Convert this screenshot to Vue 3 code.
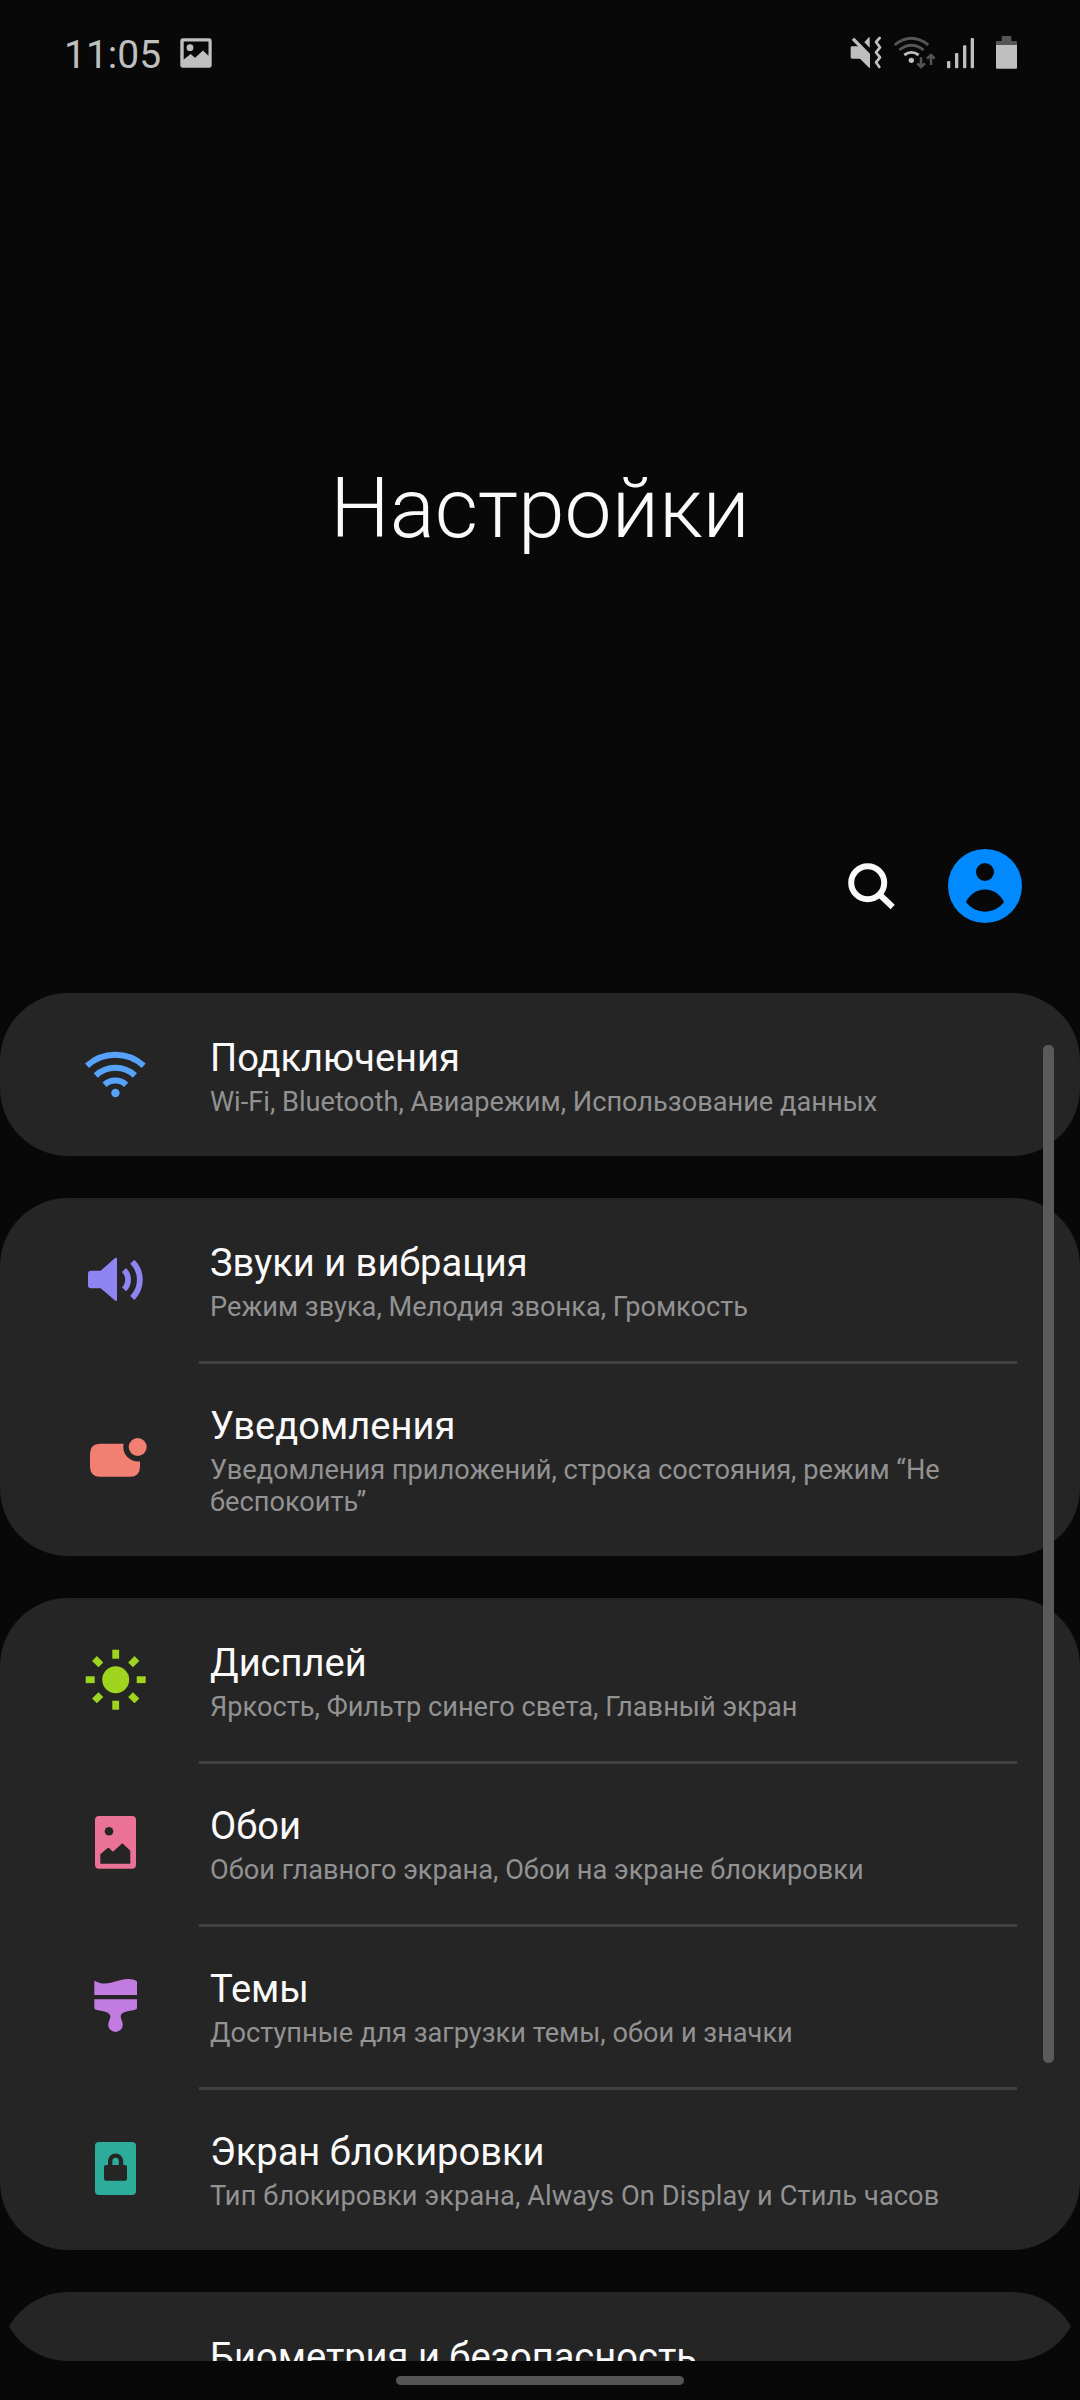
<script setup>
const groups = [
  [
    { icon: 'wifi', title: 'Подключения', sub: 'Wi-Fi, Bluetooth, Авиарежим, Использование данных' },
  ],
  [
    { icon: 'sound', title: 'Звуки и вибрация', sub: 'Режим звука, Мелодия звонка, Громкость' },
    { icon: 'notice', title: 'Уведомления', sub: 'Уведомления приложений, строка состояния, режим “Не беспокоить”' },
  ],
  [
    { icon: 'display', title: 'Дисплей', sub: 'Яркость, Фильтр синего света, Главный экран' },
    { icon: 'wallpaper', title: 'Обои', sub: 'Обои главного экрана, Обои на экране блокировки' },
    { icon: 'themes', title: 'Темы', sub: 'Доступные для загрузки темы, обои и значки' },
    { icon: 'lock', title: 'Экран блокировки', sub: 'Тип блокировки экрана, Always On Display и Стиль часов' },
  ],
]
const rays = [0, 45, 90, 135, 180, 225, 270, 315]
</script>

<template>
  <div class="screen">
    <header class="status">
      <span class="clock">11:05</span>
      <svg class="photo" width="32" height="31" viewBox="0 0 32 31">
        <path fill="#bfbfbf" fill-rule="evenodd" d="M3 .3H29Q31.700 .3 31.700 3V27Q31.700 29.800 29 29.800H3Q.3 29.800 .3 27V3Q.3 .3 3 .3ZM3.700 3.500V21.500L10.700 16L15 19.700L23 12.500L28.500 17.700V3.500Z" />
        <circle cx="10" cy="9.700" r="3.400" fill="#bfbfbf" />
      </svg>
      <div class="indicators">
        <svg width="32" height="35" viewBox="60 45 96 105" fill="#bfbfbf">
          <path d="M65 59L73 53L120 101V143H117L90 116H66Q62 116 62 112V83Q62 79 66 79H84Z" />
          <path d="M119 51V83L103 67L115 53Z" />
          <path d="M149 54L138 66L150 82L138 97L150 112L138 127L148 141" fill="none" stroke="#bfbfbf" stroke-width="8" stroke-linejoin="round" stroke-linecap="round" />
        </svg>
        <svg class="i-wifi" width="44" height="35" viewBox="189 45 132 105" fill="none" stroke-width="8.500">
          <path d="M194 75Q244 35 295 75" stroke="#555" />
          <path d="M208 90Q244 61 281 90" stroke="#555" />
          <path d="M223 105Q244 89 266 105" stroke="#bfbfbf" />
          <circle cx="244" cy="121" r="8" fill="#bfbfbf" />
          <path d="M273 112V139M262 130L273 141L285 130M303 135V108M291 116L303 105L314 116" stroke="#555" stroke-width="7.500" />
        </svg>
        <svg class="i-signal" width="29" height="35" viewBox="348 45 87 105" fill="#bfbfbf">
          <rect x="351" y="123" width="10" height="22" rx="3" />
          <rect x="375" y="99" width="10" height="46" rx="3" />
          <rect x="399" y="76" width="10" height="69" rx="3" />
          <rect x="422" y="54" width="10" height="91" rx="3" />
        </svg>
        <svg class="i-battery" width="23" height="35" viewBox="495 45 69 105">
          <path d="M518 48H541Q544 48 544 51V63H558Q561 63 561 66V76H498V66Q498 63 501 63H515V51Q515 48 518 48Z" fill="#555" />
          <path d="M498 75H561V143Q561 146 558 146H501Q498 146 498 143Z" fill="#bfbfbf" />
        </svg>
      </div>
    </header>

    <h1 class="heading">Настройки</h1>

    <div class="actions">
      <svg width="54" height="54" viewBox="0 0 54 54" fill="none" stroke="#fafafa" stroke-width="6">
        <circle cx="23.700" cy="23.700" r="16.500" />
        <path d="M35.500 35.500L48.700 48" />
      </svg>
      <svg class="avatar" width="74" height="74" viewBox="0 0 74 74">
        <circle cx="37" cy="37" r="37" fill="#018aff" />
        <circle cx="37" cy="23" r="9" fill="#080808" />
        <path d="M18 53.300A20.500 20.500 0 0 1 56 53.300A24 24 0 0 1 18 53.300Z" fill="#080808" />
      </svg>
    </div>

    <main class="list">
      <section v-for="(group, g) in groups" :key="g" class="card">
        <article v-for="item in group" :key="item.icon" class="row" :class="item.icon">
          <svg class="icon" width="73" height="73" viewBox="0 0 73 73">
            <g v-if="item.icon === 'wifi'" fill="none" stroke="#57a3fb" stroke-width="6">
              <path d="M8 27.700A42 42 0 0 1 64.700 27.700" />
              <path d="M16.800 37.500A28.500 28.500 0 0 1 55.900 37.500" />
              <path d="M25.500 46.700A16 16 0 0 1 47.200 46.700" />
              <circle cx="36.400" cy="55" r="4.200" fill="#57a3fb" stroke="none" />
            </g>
            <g v-else-if="item.icon === 'sound'" fill="#8f85f2">
              <path d="M12 27.700H21.700L36 15Q38 14 38 16V56.500Q38 59 36 57.500L21.700 45.300H12Q9 45.300 9 42.300V30.700Q9 27.700 12 27.700Z" />
              <path d="M45 27A13.500 13.500 0 0 1 45 46.300M53.300 18.700A25.600 25.600 0 0 1 53.300 55" fill="none" stroke="#8f85f2" stroke-width="5.800" />
            </g>
            <g v-else-if="item.icon === 'notice'" fill="#f28072">
              <path d="M21 21.700H44.600A14.500 14.500 0 0 0 61 39.300V44.700Q61 54.700 51 54.700H21Q11 54.700 11 44.700V31.700Q11 21.700 21 21.700Z" />
              <circle cx="58.700" cy="25" r="9" />
            </g>
            <g v-else-if="item.icon === 'display'" fill="#9fd51f">
              <circle cx="36.700" cy="36.700" r="13.500" />
              <rect v-for="r in rays" :key="r" x="33.300" y="6.700" width="6.800" height="9" :transform="`rotate(${r} 36.7 36.7)`" />
            </g>
            <g v-else-if="item.icon === 'wallpaper'">
              <rect x="16" y="10" width="41" height="52.800" rx="4" fill="#e97296" />
              <circle cx="30" cy="25.300" r="4.300" fill="#252525" />
              <path d="M21.300 57.700V48.300L28.300 42.300Q29.300 41.500 30.300 42.300L34 45.700L42.400 37.900Q43.300 37 44.200 37.900L51.300 44.700V57.700Z" fill="#252525" />
            </g>
            <g v-else-if="item.icon === 'themes'" fill="#c27be0">
              <path d="M15.300 11.700C29 19 37 10 49 10Q56 10 58 12.500V26H15.300Z" />
              <path d="M15.300 30.300H58V39.500Q57.500 40.700 54 41.300C46 42.500 41.700 44 41.700 47.500C41.700 50.500 43.800 52.500 43.800 55.700A7.300 7.300 0 0 1 29.200 55.700C29.200 52.500 31.300 50.500 31.300 47.500C31.300 44 27 42.500 19 41.300Q15.800 40.700 15.300 39.500Z" />
            </g>
            <g v-else>
              <rect x="16" y="10" width="41" height="53" rx="4" fill="#2dac9b" />
              <rect x="25" y="33" width="23" height="15.800" rx="2" fill="#252525" />
              <path d="M31.200 34V29A5.400 5.400 0 0 1 42 29V34" fill="none" stroke="#252525" stroke-width="4.400" />
            </g>
          </svg>
          <div class="text">
            <div class="title">{{ item.title }}</div>
            <div class="sub">{{ item.sub }}</div>
          </div>
        </article>
      </section>
      <section class="card cut">
        <article class="row">
          <div class="text">
            <div class="title">Биометрия и безопасность</div>
          </div>
        </article>
      </section>
      <div class="scrollbar"></div>
    </main>

    <footer class="nav"><div class="handle"></div></footer>
  </div>
</template>

<style>
body { background: #080808; }
</style>

<style scoped>
.screen {
  display: flex;
  flex-direction: column;
  width: 1080px;
  height: 2400px;
  overflow: hidden;
  background: #080808;
  color: #fafafa;
  font-family: Roboto, "Noto Sans", sans-serif;
}
svg { display: block; flex: none; }
.status {
  display: flex;
  align-items: flex-start;
  height: 108px;
  flex: none;
  padding: 0 62px 0 64px;
  box-sizing: border-box;
}
.clock {
  width: 116px;
  padding-top: 32px;
  font-size: 39px;
  line-height: 46px;
  color: #bfbfbf;
}
.photo { margin-top: 38px; }
.indicators {
  display: flex;
  margin: 35px 0 0 auto;
}
.i-wifi { margin-left: 11px; }
.i-signal { margin-left: 9px; }
.i-battery { margin-left: 20px; }
.heading {
  flex: none;
  height: 735px;
  margin: 0;
  padding-top: 351px;
  box-sizing: border-box;
  text-align: center;
  font-size: 84px;
  font-weight: 300;
  line-height: 100px;
}
.actions {
  display: flex;
  flex: none;
  justify-content: flex-end;
  align-items: flex-start;
  height: 150px;
  padding: 6px 58px 0 0;
  box-sizing: border-box;
}
.actions svg:first-child { margin: 10px 50px 0 0; }
.list {
  position: relative;
  display: flex;
  flex-direction: column;
  gap: 42px;
  flex: none;
  height: 1368px;
  overflow: hidden;
}
.card {
  flex: none;
  border-radius: 68px;
  background: #252525;
  overflow: hidden;
}
.row {
  position: relative;
  display: flex;
  align-items: center;
  min-height: 163px;
  padding: 0 62px 0 79px;
  box-sizing: border-box;
}
.row + .row::before {
  content: "";
  position: absolute;
  top: 0;
  left: 199px;
  right: 63px;
  height: 3px;
  background: #404040;
}
.text {
  align-self: flex-start;
  flex: 1;
  margin-left: 58px;
  padding: 43px 60px 38px 0;
}
.title {
  font-size: 38.1px;
  line-height: 45px;
  white-space: nowrap;
}
.sub {
  margin-top: 5px;
  font-size: 27.2px;
  line-height: 32px;
  color: #929292;
}
.lock .sub { letter-spacing: 0.1px; }
/* The last card is trimmed by the list edge and keeps round lower corners */
.cut {
  height: 69px;
  border-radius: 0;
  clip-path: path("M68 0H1012A68 68 0 0 1 1071 34.500A68 68 0 0 1 1012 69H68A68 68 0 0 1 9 34.500A68 68 0 0 1 68 0Z");
}
.cut .text { margin-left: 131px; }
.scrollbar {
  position: absolute;
  top: 52px;
  left: 1043px;
  width: 11px;
  height: 1018px;
  border-radius: 5px;
  background: #5a5a5a;
}
.nav {
  display: flex;
  flex: 1;
  justify-content: center;
  padding-top: 15px;
}
.handle {
  width: 288px;
  height: 9px;
  border-radius: 5px;
  background: #545454;
}
</style>
